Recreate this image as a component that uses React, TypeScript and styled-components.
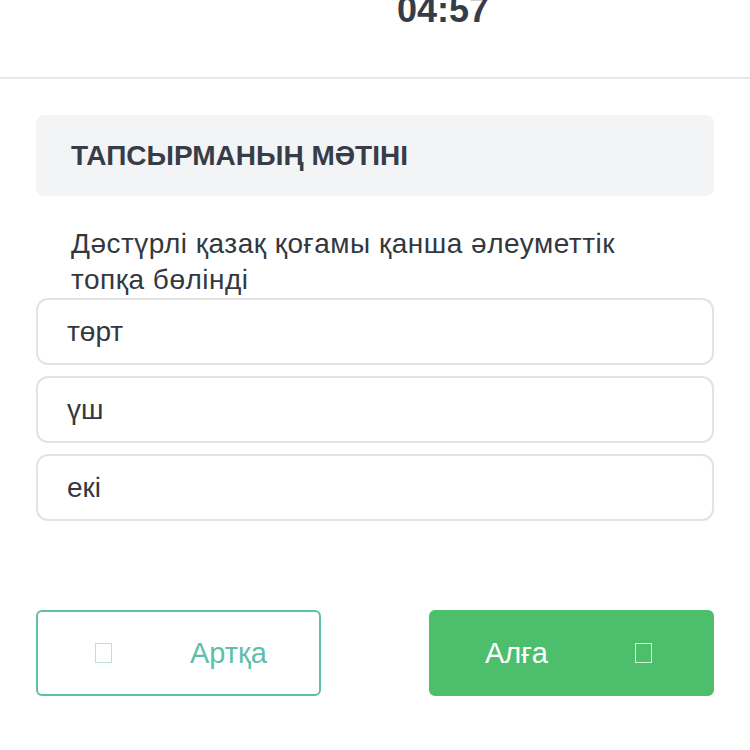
import React from 'react';
import styled, { createGlobalStyle } from 'styled-components';

const GlobalStyle = createGlobalStyle`
  html, body {
    margin: 0;
    padding: 0;
    background: #ffffff;
    font-family: "Liberation Sans", Arial, sans-serif;
    overflow: hidden;
  }
  * { box-sizing: border-box; }
`;

const Page = styled.div`
  width: 750px;
  height: 750px;
  overflow: hidden;
`;

const TopBar = styled.header`
  margin-top: -8px;
  display: flex;
  justify-content: center;
  padding: 0 0 49px 136px;
  border-bottom: 2px solid #e6e7e9;
`;

const Timer = styled.div`
  font-size: 36px;
  line-height: 36px;
  font-weight: 700;
  color: #363d48;
`;

const Content = styled.main`
  padding: 36px 36px 0;
`;

const TaskHeader = styled.div`
  height: 81px;
  display: flex;
  align-items: center;
  padding: 0 35px;
  background: #f3f4f6;
  border-radius: 8px;
`;

const TaskTitle = styled.h2`
  margin: 0;
  font-size: 28px;
  font-weight: 700;
  color: #363d48;
`;

const Question = styled.p`
  margin: 30px 0 0;
  padding: 0 70px 0 35px;
  font-size: 28px;
  line-height: 36px;
  letter-spacing: 0.5px;
  color: #333840;
`;

const Options = styled.div`
  display: flex;
  flex-direction: column;
  gap: 11px;
`;

const Option = styled.div`
  height: 67px;
  display: flex;
  align-items: center;
  padding: 0 29px;
  border: 2px solid #e3e3e3;
  border-radius: 12px;
  font-size: 28px;
  color: #333840;
`;

const Footer = styled.div`
  display: flex;
  justify-content: space-between;
  margin-top: 89px;
`;

const NavButton = styled.button<{ $primary?: boolean; $gap: number; $pad: number }>`
  width: 285px;
  height: 86px;
  display: flex;
  align-items: center;
  gap: ${p => p.$gap}px;
  padding: 0 0 0 ${p => p.$pad}px;
  border: 2px solid ${p => (p.$primary ? '#4dbf6c' : '#5ebfa9')};
  border-radius: 6px;
  background: ${p => (p.$primary ? '#4dbf6c' : '#ffffff')};
  color: ${p => (p.$primary ? '#ffffff' : '#5ebfa9')};
  font-family: "Liberation Sans", Arial, sans-serif;
  font-size: 29px;
  cursor: pointer;
`;

const Glyph = styled.span<{ $light?: boolean }>`
  width: 17px;
  height: 20px;
  border: 1px solid ${p => (p.$light ? 'rgba(255,255,255,0.75)' : '#b9e3d8')};
`;

const options = ['төрт', 'үш', 'екі'];

const App = () => {
  return (
    <Page>
      <GlobalStyle />
      <TopBar>
        <Timer>04:57</Timer>
      </TopBar>
      <Content>
        <TaskHeader>
          <TaskTitle>ТАПСЫРМАНЫҢ МӘТІНІ</TaskTitle>
        </TaskHeader>
        <Question>Дәстүрлі қазақ қоғамы қанша әлеуметтік топқа бөлінді</Question>
        <Options>
          {options.map(o => (
            <Option key={o}>{o}</Option>
          ))}
        </Options>
        <Footer>
          <NavButton $gap={78} $pad={57}>
            <Glyph />
            Артқа
          </NavButton>
          <NavButton $primary $gap={87} $pad={54}>
            Алға
            <Glyph $light />
          </NavButton>
        </Footer>
      </Content>
    </Page>
  );
};

export default App;
